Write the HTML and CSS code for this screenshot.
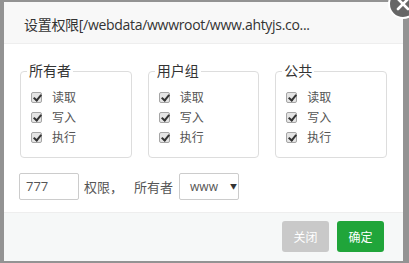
FILE: index.html
```html
<!DOCTYPE html>
<html>
<head>
<meta charset="utf-8">
<link rel="stylesheet" href="styles.css">
</head>
<body>
<div class="dialog">
  <div class="header">设置权限[/webdata/wwwroot/www.ahtyjs.co...</div>
  <span class="close"><svg width="14" height="14" viewBox="0 0 14 14"><path d="M2 2 L12 12 M12 2 L2 12" stroke="#fff" stroke-width="2.6" stroke-linecap="round"/></svg></span>
  <div class="content">
    <div class="groups">
      <div class="group">
        <span class="legend">所有者</span>
        <div class="row"><span class="cb"></span>读取</div>
        <div class="row"><span class="cb"></span>写入</div>
        <div class="row"><span class="cb"></span>执行</div>
      </div>
      <div class="group">
        <span class="legend">用户组</span>
        <div class="row"><span class="cb"></span>读取</div>
        <div class="row"><span class="cb"></span>写入</div>
        <div class="row"><span class="cb"></span>执行</div>
      </div>
      <div class="group">
        <span class="legend">公共</span>
        <div class="row"><span class="cb"></span>读取</div>
        <div class="row"><span class="cb"></span>写入</div>
        <div class="row"><span class="cb"></span>执行</div>
      </div>
    </div>
    <div class="line">
      <div class="input">777</div>
      <span class="t1">权限，</span>
      <span class="t2">所有者</span>
      <div class="select">www<span class="arrow">▼</span></div>
    </div>
  </div>
  <div class="footer">
    <button class="btn gray">关闭</button>
    <button class="btn green">确定</button>
  </div>
</div>
</body>
</html>
```
FILE: styles.css
```css
html, body {
  margin: 0;
  padding: 0;
}
body {
  width: 409px;
  height: 263px;
  overflow: hidden;
  background: #939393;
  font-family: "Open Sans", "Noto Sans CJK SC", sans-serif;
  color: #333;
}
.dialog {
  position: relative;
  margin: 2px 0 0 4px;
  width: 399px;
  height: 259px;
  background: #fff;
  display: flex;
  flex-direction: column;
}
.header {
  height: 37px;
  padding-top: 4px;
  line-height: 37px;
  padding-left: 20px;
  font-size: 14px;
  letter-spacing: -0.3px;
  color: #333;
  background: #f8f8f8;
  border-bottom: 1px solid #eee;
  white-space: nowrap;
  overflow: hidden;
}
.close {
  position: absolute;
  left: 384px;
  top: -13px;
  width: 26px;
  height: 26px;
  border-radius: 50%;
  background: #666;
  border: 2px solid #fff;
  display: flex;
  align-items: center;
  justify-content: center;
}
.content {
  padding: 27px 16px 12px 16px;
  flex: none;
}
.groups {
  display: flex;
  gap: 16px;
}
.group {
  position: relative;
  width: 113px;
  box-sizing: border-box;
  border: 1px solid #ddd;
  border-radius: 4px;
  padding: 15px 0 10px 10px;
}
.legend {
  position: absolute;
  top: -11px;
  left: 6px;
  padding: 0 2px;
  background: #fff;
  font-size: 14px;
  line-height: 20px;
  color: #333;
}
.row {
  height: 20px;
  display: flex;
  align-items: center;
  font-size: 12px;
  color: #555;
}
.cb {
  position: relative;
  width: 9px;
  height: 9px;
  border: 1px solid #a5a5a5;
  border-radius: 2px;
  background: #e4e4e4;
  margin-right: 10px;
  flex: none;
}
.cb::after {
  content: "";
  position: absolute;
  left: 3px;
  top: 0px;
  width: 3px;
  height: 6px;
  border-right: 2px solid #333;
  border-bottom: 2px solid #333;
  transform: rotate(40deg);
}
.line {
  margin-top: 15px;
  display: flex;
  align-items: center;
  height: 27px;
  font-size: 13px;
  color: #555;
}
.input {
  margin-left: -1px;
  width: 60px;
  height: 27px;
  box-sizing: border-box;
  border: 1px solid #ccc;
  border-radius: 2px;
  padding-left: 6px;
  line-height: 25px;
  font-size: 13px;
  color: #555;
}
.t1 {
  margin-left: 5px;
}
.t2 {
  margin-left: 11px;
}
.select {
  margin-left: 6px;
  width: 60px;
  height: 27px;
  box-sizing: border-box;
  border: 1px solid #ccc;
  border-radius: 2px;
  padding-left: 10px;
  line-height: 25px;
  font-size: 12px;
  color: #555;
  display: flex;
  align-items: center;
}
.arrow {
  margin-left: 12px;
  font-size: 7px;
  color: #333;
}
.footer {
  flex: 1;
  border-top: 1px solid #eee;
  background: #f6f8f8;
  display: flex;
  justify-content: flex-end;
  align-items: flex-start;
  gap: 8px;
  padding: 8px 19px 0 0;
}
.btn {
  width: 47px;
  height: 31px;
  border: none;
  border-radius: 3px;
  color: #fff;
  font-size: 12px;
  font-family: "Open Sans", "Noto Sans CJK SC", sans-serif;
  padding: 0;
}
.gray {
  background: #c9c9c9;
}
.green {
  background: #20a53a;
}
```
